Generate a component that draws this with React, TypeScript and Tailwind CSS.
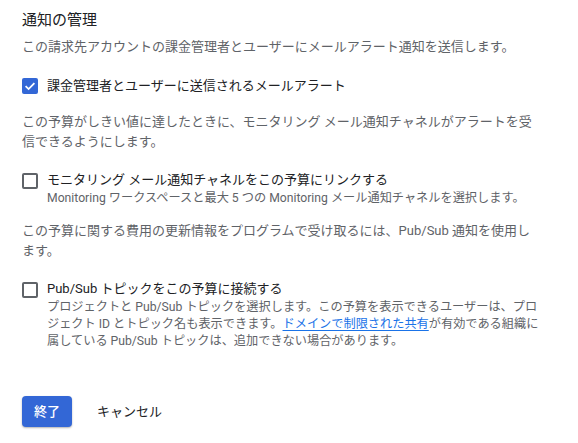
import React from 'react';

const font = { fontFamily: 'Roboto, "Noto Sans CJK JP", sans-serif' };

// チェックボックス（見た目だけ）
const Box: React.FC<{ checked?: boolean }> = ({ checked }) =>
    checked ? (
        <span className="flex h-4 w-4 shrink-0 items-center justify-center rounded-[2px] bg-[#3367d6]">
            <svg viewBox="0 0 16 16" className="h-4 w-4">
                <path d="M3.6 8.2 L6.6 11.1 L12.4 5.2" fill="none" stroke="#fff" strokeWidth="1.8" />
            </svg>
        </span>
    ) : (
        <span className="block h-4 w-4 shrink-0 rounded-[2px] border-2 border-[#5f6368]" />
    );

const App: React.FC = () => {
    return (
        <div className="min-h-screen bg-white px-[22px] pt-[10px]" style={font}>
            <h2 className="text-[15px] leading-[20px] text-[#202124]">通知の管理</h2>
            <p className="mt-[7px] text-[13px] leading-[20px] text-[#5f6368]">
                この請求先アカウントの課金管理者とユーザーにメールアラート通知を送信します。
            </p>

            <div className="mt-[19px] flex items-center gap-[9px]">
                <Box checked />
                <span className="text-[13px] leading-[20px] text-[#202124]">課金管理者とユーザーに送信されるメールアラート</span>
            </div>

            <p className="mt-[16px] w-[520px] text-[13px] leading-[20px] text-[#5f6368]">
                この予算がしきい値に達したときに、モニタリング メール通知チャネルがアラートを受信できるようにします。
            </p>

            <div className="mt-[18px] flex gap-[9px]">
                <div className="pt-[3px]">
                    <Box />
                </div>
                <div>
                    <div className="text-[13px] leading-[20px] text-[#202124]">モニタリング メール通知チャネルをこの予算にリンクする</div>
                    <div className="text-[12.2px] leading-[17px] text-[#5f6368]">
                        Monitoring ワークスペースと最大 5 つの Monitoring メール通知チャネルを選択します。
                    </div>
                </div>
            </div>

            <p className="mt-[14px] w-[520px] text-[13px] leading-[20px] text-[#5f6368]">
                この予算に関する費用の更新情報をプログラムで受け取るには、Pub/Sub 通知を使用します。
            </p>

            <div className="mt-[18px] flex gap-[9px]">
                <div className="pt-[3px]">
                    <Box />
                </div>
                <div className="w-[492px]">
                    <div className="text-[13px] leading-[20px] text-[#202124]">Pub/Sub トピックをこの予算に接続する</div>
                    <div className="text-[12.2px] leading-[17px] text-[#5f6368]">
                        プロジェクトと Pub/Sub トピックを選択します。この予算を表示できるユーザーは、プロジェクト ID とトピック名も表示できます。
                        <a href="#" className="text-[#1a73e8] underline underline-offset-2">ドメインで制限された共有</a>
                        が有効である組織に属している Pub/Sub トピックは、追加できない場合があります。
                    </div>
                </div>
            </div>

            <div className="mt-[46px] flex items-center">
                <button className="h-[31px] w-[50px] rounded-[4px] bg-[#3367d6] text-[13px] font-medium text-white shadow-[0_1px_2px_rgba(0,0,0,0.3)]">
                    終了
                </button>
                <button className="ml-[25px] text-[13px] text-[#202124]">キャンセル</button>
            </div>
        </div>
    );
};

export default App;
